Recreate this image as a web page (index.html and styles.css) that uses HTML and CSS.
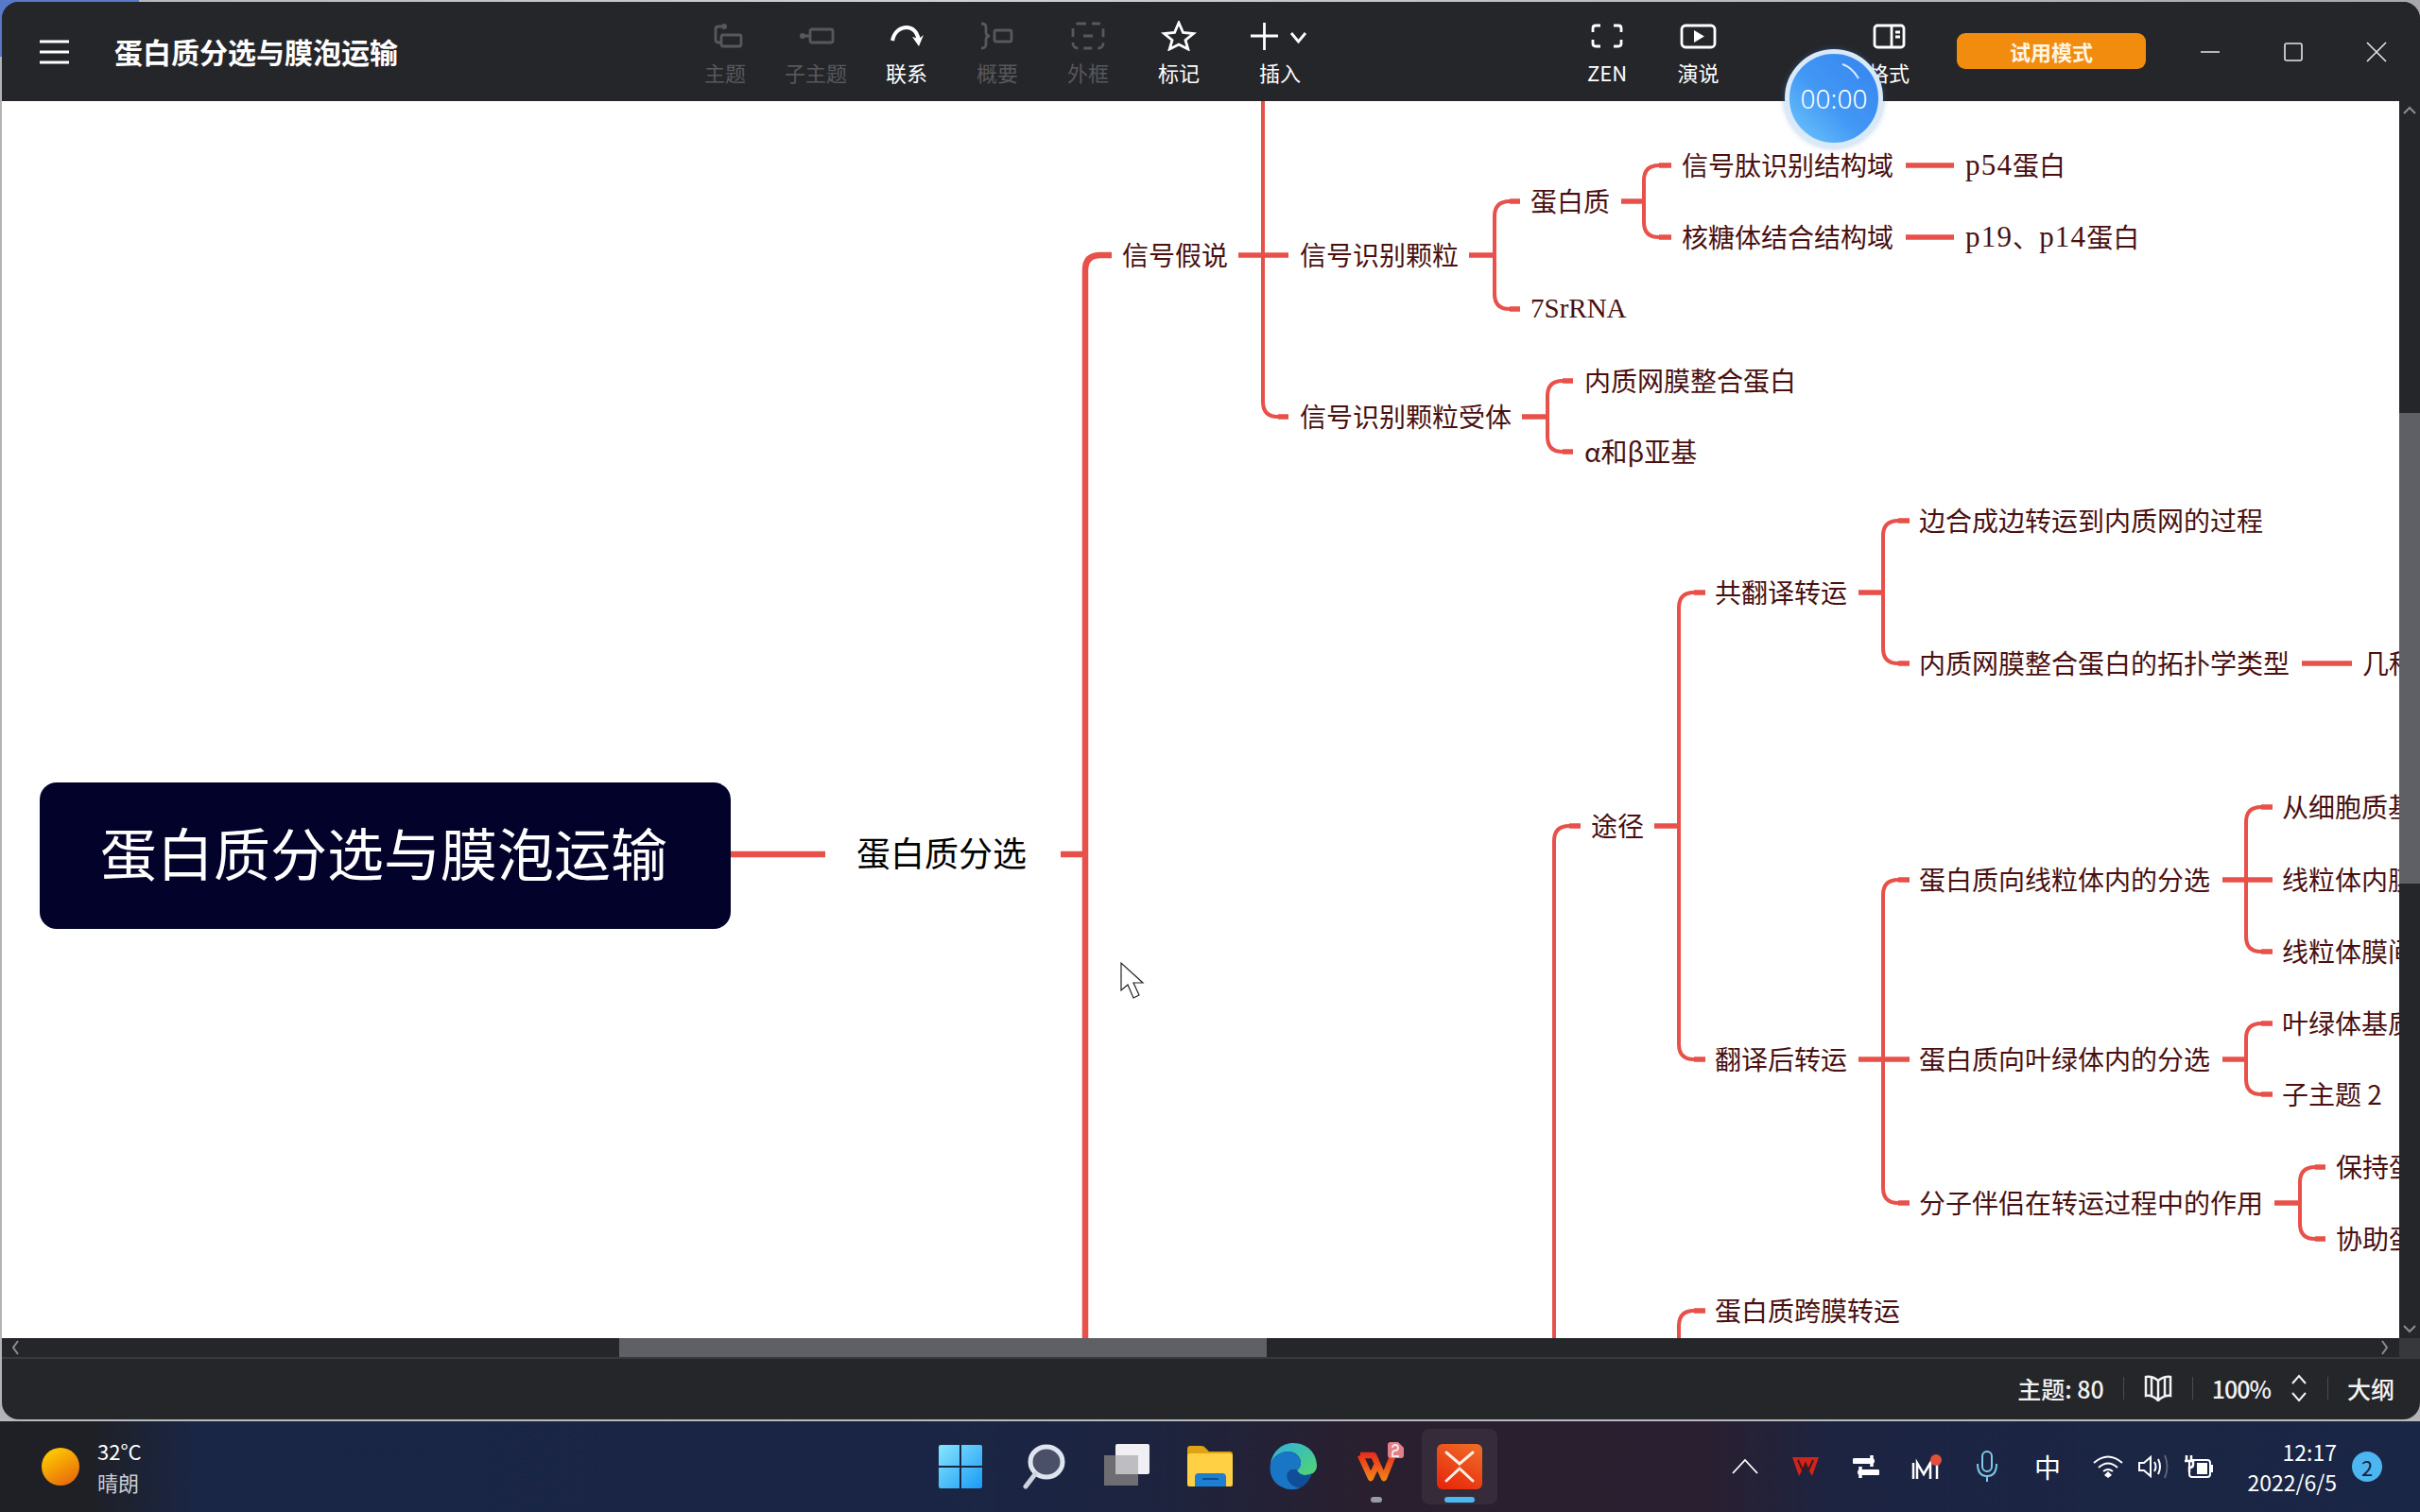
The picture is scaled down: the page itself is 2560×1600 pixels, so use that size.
FILE: index.html
```html
<!DOCTYPE html>
<html lang="zh-CN">
<head>
<meta charset="utf-8">
<title>蛋白质分选与膜泡运输</title>
<link rel="stylesheet" href="styles.css">
</head>
<body>
<div class="window">
  <header class="titlebar">
    <div class="brand">
      <svg class="menu" width="32" height="26" viewBox="0 0 32 26"><path d="M0 2H31M0 13H31M0 24H31"/></svg>
      <span class="doc-title">蛋白质分选与膜泡运输</span>
    </div>
    <div class="tool off">
      <svg width="40" height="32" viewBox="0 0 40 32"><circle cx="19" cy="6" r="3" class="f"/><path d="M18 6H13Q10 6 10 9V20Q10 23 13 23H16"/><rect x="16" y="15" width="21" height="12" rx="2"/></svg>
      <span>主题</span>
    </div>
    <div class="tool off">
      <svg width="40" height="32" viewBox="0 0 40 32"><circle cx="6" cy="16" r="3" class="f"/><path d="M8 16H13"/><rect x="14" y="9" width="24" height="14" rx="2"/></svg>
      <span>子主题</span>
    </div>
    <div class="tool">
      <svg width="40" height="32" viewBox="0 0 40 32"><path class="thick" d="M5 21C7 11 14 7 20 7C27 7 31 12 33 20"/><path class="f" d="M26 17L33 27L38 15L33 19Z"/></svg>
      <span>联系</span>
    </div>
    <div class="tool off">
      <svg width="40" height="32" viewBox="0 0 40 32"><path d="M3 3Q8 3 8 7V12Q8 16 12 16Q8 16 8 20V25Q8 29 3 29"/><rect x="17" y="10" width="18" height="12" rx="2"/></svg>
      <span>概要</span>
    </div>
    <div class="tool off">
      <svg width="40" height="32" viewBox="0 0 40 32"><rect x="4" y="3" width="32" height="26" rx="5" stroke-dasharray="9 6"/><path d="M15 16H25"/></svg>
      <span>外框</span>
    </div>
    <div class="tool">
      <svg width="40" height="32" viewBox="0 0 40 32"><path d="M20 2L24.500 12.500L35.500 13.500L27 20.500L29.800 30L20 25L10.200 30L13 20.500L4.500 13.500L15.500 12.500Z"/></svg>
      <span>标记</span>
    </div>
    <div class="tool wide">
      <svg width="64" height="32" viewBox="0 0 64 32"><path d="M1 16H30M15.500 2V31"/><path d="M44 13L51.500 22L59 13"/></svg>
      <span>插入</span>
    </div>
    <div class="tool zen">
      <svg width="40" height="32" viewBox="0 0 40 32"><path d="M13 5H8Q5 5 5 8V12M27 5H32Q35 5 35 8V12M13 27H8Q5 27 5 24V20M27 27H32Q35 27 35 24V20"/></svg>
      <span>ZEN</span>
    </div>
    <div class="tool talk">
      <svg width="40" height="32" viewBox="0 0 40 32"><rect x="2" y="5" width="35" height="23" rx="4"/><path class="f" d="M15 10L26 16.500L15 23Z"/></svg>
      <span>演说</span>
    </div>
    <div class="tool fmt">
      <svg width="40" height="32" viewBox="0 0 40 32"><rect x="5" y="5" width="31" height="23" rx="3"/><path d="M23 5V28M27 12H32M27 17H32"/></svg>
      <span>格式</span>
    </div>
    <div class="trial">试用模式</div>
    <div class="winctl">
      <svg width="22" height="22" viewBox="0 0 22 22"><path d="M1 11H21"/></svg>
    </div>
    <div class="winctl">
      <svg width="22" height="22" viewBox="0 0 22 22"><rect x="2" y="2" width="18" height="18" rx="2"/></svg>
    </div>
    <div class="winctl">
      <svg width="22" height="22" viewBox="0 0 22 22"><path d="M1 1L21 21M21 1L1 21"/></svg>
    </div>
  </header>

  <div class="timer">
    <svg class="timer-arc" width="30" height="24" viewBox="0 0 30 24"><path d="M4 3Q14 6 21 18"/></svg>
    <span>00:00</span>
  </div>

  <div class="workspace">
    <main class="canvas">
      <svg class="map" width="2536" height="1309" viewBox="2 107 2536 1309">
        <g class="lines-main">
          <path d="M773 904H873"/>
          <path d="M1122 904H1148"/>
          <path d="M1176 270H1164Q1148 270 1148 286V1420"/>
        </g>
        <g class="lines">
          <path d="M1336 100V425Q1336 441 1352 441H1363"/>
          <path d="M1608 213H1597Q1581 213 1581 229V311Q1581 327 1597 327H1608"/>
          <path d="M1768 175H1755Q1739 175 1739 191V235Q1739 251 1755 251H1768"/>
          <path d="M1664 403H1653Q1637 403 1637 419V462Q1637 478 1653 478H1664"/>
          <path d="M1672 874H1660Q1644 874 1644 890V1420"/>
          <path d="M1804 627H1792Q1776 627 1776 643V1105Q1776 1121 1792 1121H1804"/>
          <path d="M1804 1387H1792Q1776 1387 1776 1403V1420"/>
          <path d="M2020 551H2008Q1992 551 1992 567V686Q1992 702 2008 702H2020"/>
          <path d="M2020 931H2008Q1992 931 1992 947V1257Q1992 1273 2008 1273H2020"/>
          <path d="M2404 854H2392Q2376 854 2376 870V991Q2376 1007 2392 1007H2404"/>
          <path d="M2404 1083H2392Q2376 1083 2376 1099V1142Q2376 1158 2392 1158H2404"/>
          <path d="M2460 1235H2449Q2433 1235 2433 1251V1295Q2433 1311 2449 1311H2460"/>
        </g>
        <g class="stubs">
          <path d="M1310 270H1363"/>
          <path d="M1352 441H1363"/>
          <path d="M1554 270H1581"/>
          <path d="M1597 213H1608M1597 327H1608"/>
          <path d="M1715 213H1739"/>
          <path d="M1755 175H1768M1755 251H1768"/>
          <path d="M2016 175H2067"/>
          <path d="M2016 251H2067"/>
          <path d="M1610 441H1637"/>
          <path d="M1653 403H1664M1653 478H1664"/>
          <path d="M1660 874H1672"/>
          <path d="M1750 874H1776"/>
          <path d="M1792 627H1804M1792 1121H1804M1792 1387H1804"/>
          <path d="M1966 627H1992"/>
          <path d="M2008 551H2020M2008 702H2020"/>
          <path d="M2435 702H2488"/>
          <path d="M2008 931H2020M2008 1273H2020"/>
          <path d="M1966 1121H2020"/>
          <path d="M2351 931H2404"/>
          <path d="M2392 854H2404M2392 1007H2404"/>
          <path d="M2351 1121H2376"/>
          <path d="M2392 1083H2404M2392 1158H2404"/>
          <path d="M2406 1273H2433"/>
          <path d="M2449 1235H2460M2449 1311H2460"/>
        </g>
        <rect class="root" x="42" y="828" width="731" height="155" rx="18"/>
        <text class="root-text" x="106" y="903">蛋白质分选与膜泡运输</text>
        <text class="l1" x="906" y="903">蛋白质分选</text>
        <text class="clip" x="1541" y="99">信号间</text>
        <text class="n" x="1187" y="270">信号假说</text>
        <text class="n" x="1375" y="270">信号识别颗粒</text>
        <text class="n" x="1375" y="441">信号识别颗粒受体</text>
        <text class="n" x="1619" y="213">蛋白质</text>
        <text class="n serif" x="1619" y="327">7SrRNA</text>
        <text class="n" x="1779" y="175">信号肽识别结构域</text>
        <text class="n" x="1779" y="251">核糖体结合结构域</text>
        <text class="n" x="2079" y="175"><tspan class="latin">p54</tspan>蛋白</text>
        <text class="n" x="2079" y="251"><tspan class="latin">p19</tspan>、<tspan class="latin">p14</tspan>蛋白</text>
        <text class="n" x="1676" y="403">内质网膜整合蛋白</text>
        <text class="n" x="1676" y="478">α和β亚基</text>
        <text class="n" x="1683" y="874">途径</text>
        <text class="n" x="1814" y="627">共翻译转运</text>
        <text class="n" x="1814" y="1121">翻译后转运</text>
        <text class="n" x="1814" y="1387">蛋白质跨膜转运</text>
        <text class="n" x="2030" y="551">边合成边转运到内质网的过程</text>
        <text class="n" x="2030" y="702">内质网膜整合蛋白的拓扑学类型</text>
        <text class="n" x="2499" y="702">几种类型</text>
        <text class="n" x="2030" y="931">蛋白质向线粒体内的分选</text>
        <text class="n" x="2030" y="1121">蛋白质向叶绿体内的分选</text>
        <text class="n" x="2030" y="1273">分子伴侣在转运过程中的作用</text>
        <text class="n" x="2414" y="854">从细胞质基质</text>
        <text class="n" x="2414" y="931">线粒体内膜</text>
        <text class="n" x="2414" y="1007">线粒体膜间</text>
        <text class="n" x="2414" y="1083">叶绿体基质</text>
        <text class="n" x="2414" y="1158">子主题 2</text>
        <text class="n" x="2471" y="1235">保持蛋白</text>
        <text class="n" x="2471" y="1311">协助蛋白</text>
        <path class="cursor" d="M1186 1019V1048L1193 1042L1199 1056L1205 1053L1199 1040L1209 1040Z"/>
      </svg>
    </main>
    <aside class="vscroll">
      <svg class="arrow" width="22" height="20" viewBox="0 0 22 20"><path d="M5 13L11 7L17 13"/></svg>
      <div class="vthumb"></div>
      <svg class="arrow bottom" width="22" height="20" viewBox="0 0 22 20"><path d="M5 7L11 13L17 7"/></svg>
    </aside>
  </div>

  <div class="hscroll">
    <svg class="arrow" width="20" height="20" viewBox="0 0 20 20"><path d="M12 3L7 10L12 17"/></svg>
    <div class="hthumb"></div>
    <svg class="arrow right" width="20" height="20" viewBox="0 0 20 20"><path d="M8 3L13 10L8 17"/></svg>
    <div class="corner"></div>
  </div>

  <footer class="status">
    <span class="stat">主题: 80</span>
    <i class="sep"></i>
    <svg class="ic" width="32" height="28" viewBox="0 0 32 28"><path d="M16 6Q10 1 3 2V22Q10 21 16 27Q22 21 29 22V2Q22 1 16 6V27M9 3V22M23 3V22"/></svg>
    <i class="sep"></i>
    <span class="stat pct">100%</span>
    <svg class="ic updown" width="20" height="30" viewBox="0 0 20 30"><path d="M3 10L10 2L17 10M3 20L10 28L17 20"/></svg>
    <i class="sep"></i>
    <span class="stat">大纲</span>
  </footer>
</div>

<nav class="taskbar">
  <div class="weather">
    <svg width="40" height="40" viewBox="0 0 40 40"><defs><linearGradient id="sun" x1="0.2" y1="0" x2="0.8" y2="1"><stop offset="0" stop-color="#ffd000"/><stop offset="1" stop-color="#e8650c"/></linearGradient></defs><circle cx="20" cy="20" r="20" fill="url(#sun)"/></svg>
    <div class="weather-text"><span>32°C</span><span class="dim">晴朗</span></div>
  </div>
  <div class="apps">
    <div class="app">
      <svg width="48" height="48" viewBox="0 0 48 48"><defs><linearGradient id="win" x1="0" y1="0" x2="1" y2="1"><stop offset="0" stop-color="#86e6fd"/><stop offset="1" stop-color="#1a9af5"/></linearGradient></defs><path fill="url(#win)" d="M3 1H23V23H1V3Q1 1 3 1ZM25 1H45Q47 1 47 3V23H25ZM1 25H23V47H3Q1 47 1 45ZM25 25H47V45Q47 47 45 47H25Z"/></svg>
    </div>
    <div class="app">
      <svg width="48" height="48" viewBox="0 0 48 48"><ellipse cx="27" cy="19" rx="17" ry="16" fill="#4a5068" stroke="#dfe5ef" stroke-width="5"/><path d="M15 32L5 45" stroke="#cdd4e0" stroke-width="5" stroke-linecap="round"/></svg>
    </div>
    <div class="app">
      <svg width="48" height="48" viewBox="0 0 48 48"><rect x="0" y="12" width="36" height="32" fill="#6e6e72"/><rect x="12" y="0" width="36" height="32" rx="2" fill="#f0f0f4"/><rect x="12" y="12" width="24" height="20" fill="#bdbdc2"/></svg>
    </div>
    <div class="app">
      <svg width="48" height="46" viewBox="0 0 48 46"><path fill="#dda312" d="M0 4Q0 1 3 1H15Q18 1 20 4L23 7H45Q48 7 48 10V20H0Z"/><path fill="#ffd043" d="M0 12Q0 9 3 9H45Q48 9 48 12V42Q48 44 46 44H2Q0 44 0 42Z"/><path fill="#1d7fd2" d="M8 44V34Q8 30 12 30H37Q41 30 41 34V44Z"/><path d="M16 36H33" stroke="#0c4f94" stroke-width="2"/></svg>
    </div>
    <div class="app">
      <svg width="50" height="50" viewBox="0 0 50 50"><defs><linearGradient id="ed1" x1="0" y1="0" x2="1" y2="1"><stop offset="0" stop-color="#2fb0e2"/><stop offset="1" stop-color="#52d66e"/></linearGradient></defs><path fill="url(#ed1)" d="M25 0C40 0 50 11 50 24C50 31 44 34 38 34C33 34 30 32 29 29C31 27 33 25 33 21C33 14 27 9 20 9C12 9 4 14 1 22C3 9 13 0 25 0Z"/><path fill="#1976c6" d="M1 22C4 14 12 9 20 9C27 9 33 14 33 21C33 25 31 27 29 29C26 27 21 28 19 32C17 38 23 47 33 47C27 50 20 50 14 47C4 43 -1 33 1 22Z"/><path fill="#0f4f9a" d="M29 29C31 32 34 34 38 34C41 34 43 33 45 32C42 41 37 45 33 47C23 47 17 38 19 32C21 28 26 27 29 29Z"/></svg>
    </div>
    <div class="app dotted">
      <svg width="60" height="52" viewBox="0 0 60 52"><defs><linearGradient id="wps" gradientUnits="userSpaceOnUse" x1="0" y1="11" x2="0" y2="42"><stop offset="0" stop-color="#ea2a1c"/><stop offset="1" stop-color="#f38a18"/></linearGradient></defs><path d="M13 14H27L31 23M13 14L24 38L31 23L38 38L48 13" fill="none" stroke="url(#wps)" stroke-width="6.500" stroke-linejoin="round"/><path d="M42 3Q42 0 45 0H53L59 6V14Q59 17 56 17H45Q42 17 42 14Z" fill="#e28088"/><path d="M47 6Q47 3 50 3Q53 3 53 6Q53 9 50 9Q47 9 47 12V15H54" fill="none" stroke="#f8e8ea" stroke-width="1.800"/></svg>
    </div>
    <div class="app active">
      <svg width="48" height="48" viewBox="0 0 48 48"><defs><linearGradient id="xm" x1="0.8" y1="0" x2="0.3" y2="1"><stop offset="0" stop-color="#ee6a26"/><stop offset="1" stop-color="#e82a0c"/></linearGradient></defs><rect width="48" height="48" rx="6" fill="url(#xm)"/><path d="M10 9L24 21L38 9M10 39L24 26L38 39" fill="none" stroke="#ffeee6" stroke-width="3" stroke-linecap="round"/></svg>
    </div>
  </div>
  <div class="tray">
    <div class="slot"><svg width="28" height="16" viewBox="0 0 28 16"><path d="M1 15L14 1L27 15" fill="none" stroke="#fff" stroke-width="1.800"/></svg></div>
    <div class="slot"><svg width="30" height="24" viewBox="0 0 30 24"><path d="M1 2H29L22 22L15 9L8 22Z" fill="#d2241a"/><path d="M7 5L12 16L15 9L18 16L23 5" fill="none" stroke="#3a1a20" stroke-width="2"/></svg></div>
    <div class="slot"><svg width="28" height="26" viewBox="0 0 28 26"><path d="M2 7H20M8 19H26" stroke="#fff" stroke-width="6" stroke-linecap="round"/><path d="M20 1V13M8 13V25" stroke="#fff" stroke-width="3.500"/></svg></div>
    <div class="slot"><svg width="32" height="28" viewBox="0 0 32 28"><path d="M2 10V27M6 27V10L13 22L20 10V27M27 12V27" fill="none" stroke="#fff" stroke-width="2.500"/><circle cx="26" cy="7" r="6" fill="#e0503c"/></svg></div>
    <div class="slot"><svg width="24" height="34" viewBox="0 0 24 34"><rect x="7" y="1" width="10" height="21" rx="5" fill="none" stroke="#7fc9e6" stroke-width="2"/><path d="M2 14Q2 27 12 27Q22 27 22 14M12 27V33" fill="none" stroke="#7fc9e6" stroke-width="2"/></svg></div>
    <div class="slot ime">中</div>
    <div class="slot small"><svg width="32" height="24" viewBox="0 0 32 24"><path d="M1 8Q16 -5 31 8M6 13Q16 4 26 13M11 17Q16 13 21 17" fill="none" stroke="#fff" stroke-width="2"/><path d="M16 17L20 21L16 24L12 21Z" fill="#fff"/></svg></div>
    <div class="slot"><svg width="32" height="26" viewBox="0 0 32 26"><path d="M1 9H6L13 3V23L6 17H1Z" fill="none" stroke="#fff" stroke-width="2"/><path d="M17 8Q20 13 17 18M21 5Q25 13 21 21" fill="none" stroke="#fff" stroke-width="2"/><path d="M28 1Q33 13 28 25" fill="none" stroke="#5a6275" stroke-width="2"/></svg></div>
    <div class="slot"><svg width="32" height="26" viewBox="0 0 32 26"><path d="M3 1V7M8 1V7M1 7H10V11Q10 14 6 14V19" fill="none" stroke="#fff" stroke-width="2.500"/><rect x="6" y="6" width="22" height="18" rx="3" fill="none" stroke="#fff" stroke-width="2"/><rect x="14" y="9" width="11" height="12" fill="#fff"/><rect x="28" y="11" width="3" height="8" fill="#fff"/></svg></div>
    <div class="clock"><span>12:17</span><span>2022/6/5</span></div>
    <div class="badge">2</div>
  </div>
</nav>
</body>
</html>
```

FILE: styles.css
```css
* { box-sizing: border-box; }

html, body {
  margin: 0;
  padding: 0;
}

body {
  width: 2560px;
  height: 1600px;
  overflow: hidden;
  display: flex;
  flex-direction: column;
  font-family: "Noto Sans CJK SC", "Noto Sans", sans-serif;
  background:
    linear-gradient(90deg, #5878c8 0, #5878c8 147px, #b9b9bd 147px, #d0d0d4 1000px, #a8a8ac 2560px) top / 100% 60px no-repeat,
    #b4b4b8;
}

/* window */
.window {
  position: relative;
  margin: 2px 0 2px 2px;
  width: 2558px;
  height: 1500px;
  display: flex;
  flex-direction: column;
  background: #25262a;
  border-radius: 18px;
  overflow: hidden;
}

.titlebar {
  flex: none;
  height: 105px;
  display: flex;
  align-items: flex-start;
  color: #fff;
  background: #25262a;
}

.brand {
  flex: none;
  width: 717px;
  height: 100%;
  display: flex;
  align-items: center;
  padding-left: 40px;
  gap: 47px;
}

.menu path {
  fill: none;
  stroke: #fff;
  stroke-width: 3;
}

.doc-title {
  font-size: 30px;
  font-weight: 700;
  line-height: 1;
  margin-top: -2px;
}

.tool {
  width: 96px;
  flex: none;
  padding-top: 20px;
  display: flex;
  flex-direction: column;
  align-items: center;
  color: #fff;
  font-size: 22px;
  line-height: 28px;
}

.tool span {
  margin-top: 8px;
  white-space: nowrap;
}

.tool svg {
  display: block;
  fill: none;
  stroke: currentColor;
  stroke-width: 2.800;
}

.tool .f {
  fill: currentColor;
  stroke: none;
}

.tool .thick {
  stroke-width: 4;
}

.tool.off {
  color: #57585c;
}

.tool.wide { width: 118px; }
.tool.zen { margin-left: 239px; }
.tool.talk { width: 97px; }
.tool.fmt { margin-left: 105px; }

.trial {
  flex: none;
  width: 200px;
  height: 38px;
  margin: 33px 0 0 24px;
  border-radius: 9px;
  background: #f28c0f;
  color: #fff5e4;
  font-size: 22px;
  font-weight: 700;
  line-height: 38px;
  text-align: center;
}

.winctl {
  flex: none;
  width: 88px;
  height: 105px;
  display: flex;
  align-items: center;
  justify-content: center;
}

.trial + .winctl { margin-left: 24px; }

.winctl svg {
  fill: none;
  stroke: #e6e6e8;
  stroke-width: 1.600;
}

/* recording timer floats over the toolbar */
.timer {
  position: absolute;
  left: 1886px;
  top: 50px;
  width: 104px;
  height: 104px;
  border-radius: 50%;
  border: 5px solid #d8e9f8;
  background: linear-gradient(225deg, #3583ee 0%, #4298f5 55%, #6fc8fc 100%);
  box-shadow: 0 0 6px rgba(60, 120, 190, .45);
  display: flex;
  align-items: center;
  justify-content: center;
  color: #fff;
  font-family: "Noto Sans", sans-serif;
  font-size: 28px;
  font-weight: 300;
}

.timer-arc {
  position: absolute;
  left: 52px;
  top: 8px;
  fill: none;
  stroke: #d9ecff;
  stroke-width: 2;
}

/* canvas */
.workspace {
  flex: none;
  height: 1309px;
  display: flex;
}

.canvas {
  flex: none;
  width: 2536px;
  height: 1309px;
  background: #fff;
  overflow: hidden;
}

.map {
  display: block;
  font-family: "Noto Sans CJK SC", "Noto Sans", sans-serif;
}

.lines-main path,
.lines path,
.stubs path {
  fill: none;
  stroke: #e8504a;
}

.lines-main path { stroke-width: 6.500; }
.lines path { stroke-width: 4; }
.stubs path { stroke-width: 5.500; }

.root { fill: #03022a; }

.root-text {
  fill: #fff;
  font-size: 60px;
  dominant-baseline: central;
  transform: translateY(-3px);
}

.l1 {
  fill: #000;
  font-size: 36px;
  dominant-baseline: central;
  transform: translateY(-2px);
}

.n {
  fill: #4a1010;
  font-size: 28px;
  dominant-baseline: central;
  transform: translateY(-1.500px);
}

.serif {
  font-family: "Liberation Serif", "Noto Sans CJK SC", serif;
  font-size: 29px;
}

.latin {
  font-family: "Liberation Serif", serif;
  font-size: 31px;
  letter-spacing: 1.200px;
}

.clip {
  fill: #222;
  font-size: 13px;
  dominant-baseline: central;
}

.cursor {
  fill: #fff;
  stroke: #222;
  stroke-width: 1.200;
}

/* scrollbars */
.vscroll {
  flex: none;
  width: 22px;
  display: flex;
  flex-direction: column;
  background: #25262a;
}

.arrow {
  flex: none;
  fill: none;
  stroke: #8c8d91;
  stroke-width: 2;
}

.vthumb {
  flex: none;
  width: 22px;
  height: 498px;
  margin-top: 310px;
  background: #5f6065;
}

.vscroll .bottom {
  margin-top: auto;
}

.hscroll {
  flex: none;
  height: 22px;
  display: flex;
  border-bottom: 2px solid #38393d;
  background: #25262a;
}

.hscroll .arrow {
  margin-left: 5px;
}

.hthumb {
  flex: none;
  width: 685px;
  margin-left: 628px;
  background: #5f6065;
}

.hscroll .right {
  margin-left: auto;
  margin-right: 6px;
}

.corner {
  flex: none;
  width: 22px;
  background: #37383c;
}

/* status */
.status {
  flex: none;
  height: 64px;
  display: flex;
  align-items: center;
  justify-content: flex-end;
  padding: 0 27px 2px 0;
  color: #f2f2f2;
  font-size: 25px;
  font-weight: 500;
}

.pct { letter-spacing: -1px; }

.sep {
  width: 1px;
  height: 24px;
  margin: 0 20px;
  background: #4a4b4f;
}

.ic {
  fill: none;
  stroke: #f2f2f2;
  stroke-width: 2.500;
}

.updown {
  margin-left: 20px;
  stroke-width: 2;
}

/* taskbar */
.taskbar {
  flex: none;
  height: 96px;
  margin-top: auto;
  display: flex;
  color: #fff;
  background: linear-gradient(90deg, #1f2025 0, #1f2025 90px, #1a2645 210px, #1a2546 950px, #1c2440 1200px, #2a1f2e 1450px, #2a1f30 1800px, #1c2442 1950px, #1a2646 2560px);
  box-shadow: 0 -2px 0 #b8babd;
}

.weather {
  flex: none;
  width: 972px;
  display: flex;
  align-items: center;
  padding-left: 44px;
  gap: 19px;
}

.weather-text {
  display: flex;
  flex-direction: column;
  font-size: 22px;
  line-height: 33px;
}

.dim { color: #c9ccd2; }

.apps {
  flex: none;
  display: flex;
  width: 616px;
  padding-top: 8px;
}

.app {
  position: relative;
  flex: none;
  width: 88px;
  height: 80px;
  display: flex;
  align-items: center;
  justify-content: center;
}

.app svg { display: block; }

.app.active {
  width: 80px;
  margin-left: 4px;
  border-radius: 8px;
  background: rgba(255, 255, 255, .055);
}

.app.dotted::after,
.app.active::after {
  content: "";
  position: absolute;
  bottom: 2px;
  height: 6px;
  border-radius: 3px;
}

.app.dotted::after {
  width: 12px;
  left: 38px;
  background: #9a9aa2;
}

.app.active::after {
  width: 32px;
  left: 24px;
  background: #4db8f0;
}

.tray {
  flex: 1;
  display: flex;
  align-items: center;
  padding-left: 226px;
}

.slot {
  flex: none;
  width: 64px;
  display: flex;
  justify-content: center;
}

.slot svg { display: block; }

.ime {
  font-size: 28px;
  line-height: 1;
}

.slot.small { margin-left: 8px; }
.slot.small,
.slot.small ~ .slot { width: 48px; }

.clock {
  flex: none;
  width: 122px;
  display: flex;
  flex-direction: column;
  align-items: flex-end;
  font-size: 23px;
  line-height: 32px;
}

.badge {
  flex: none;
  width: 32px;
  height: 32px;
  margin-left: 16px;
  border-radius: 50%;
  background: #4db5f0;
  color: #13233f;
  font-size: 22px;
  line-height: 32px;
  text-align: center;
}
```
